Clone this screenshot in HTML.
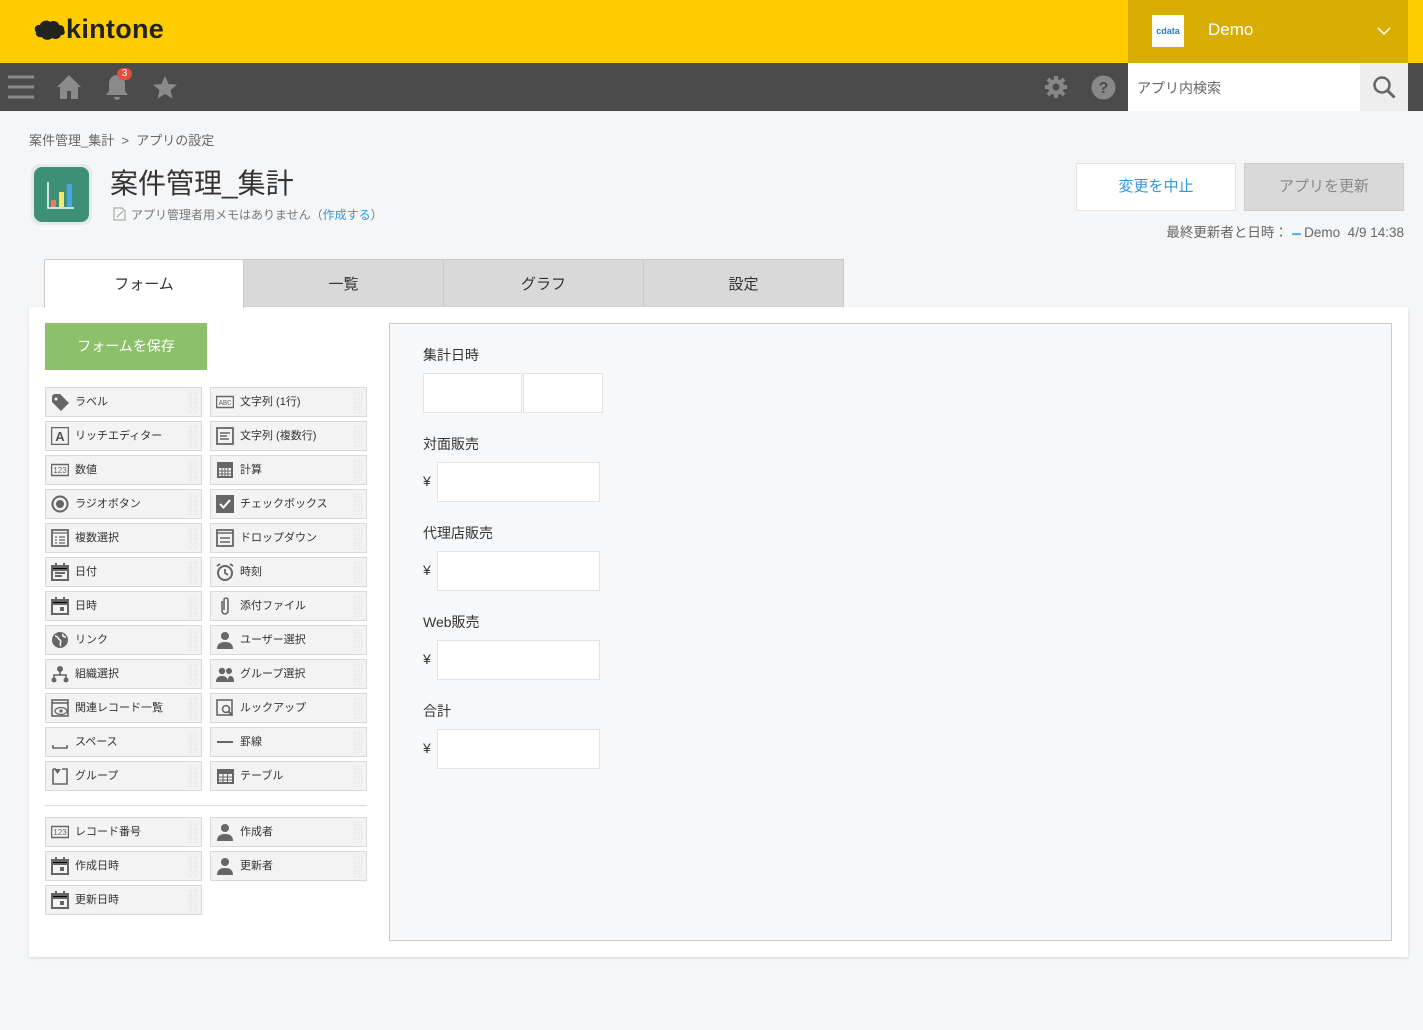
<!DOCTYPE html>
<html><head><meta charset="utf-8">
<style>
*{box-sizing:border-box;margin:0;padding:0}
body{width:1423px;height:1030px;background:#f5f6f8;font-family:"Liberation Sans","Noto Sans CJK JP",sans-serif;color:#333;position:relative;overflow:hidden}
.a{position:absolute}
.top{left:0;top:0;width:1423px;height:63px;background:#ffcc00}
.acct{left:1128px;top:0;width:280px;height:63px;background:#d9ae04}
.acct2{left:1408px;top:0;width:15px;height:63px;background:#ffcc00}
.bar{left:0;top:63px;width:1423px;height:48px;background:#4b4b4b}
.search{left:1128px;top:63px;width:232px;height:48px;background:#fff;font-size:14px;color:#666;padding:15px 0 0 9px}
.sbtn{left:1360px;top:63px;width:48px;height:48px;background:#eee}
.panel{left:29px;top:307px;width:1379px;height:650px;background:#fff;box-shadow:0 1px 3px rgba(0,0,0,.12)}
.tab{top:259px;height:48px;font-size:15px;text-align:center;line-height:50px;background:#d9d9d9;border:1px solid #c8c8c8;border-bottom:none;color:#333}
.it{width:157px;height:30px;background:#f3f3f3;border:1px solid #d9d9d9;font-size:11px;line-height:28px;padding-left:29px;color:#333}
.it svg{position:absolute;left:5px;top:5px}
.it .d{position:absolute;right:3px;top:3px;width:10px;height:22px;background:radial-gradient(circle,#fff 1px,#ccc 1.5px,transparent 2px) 0 0/5px 5px;opacity:.8}
.canvas{left:389px;top:323px;width:1003px;height:618px;background:#f7f8fa;border:1px solid #ccc}
.lbl{font-size:14px;color:#333}
.inp{background:#fff;border:1px solid #e3e3e3;height:40px}
</style></head><body>
<div class="a top"></div>
<svg class="a" style="left:32px;top:18px" width="34" height="26" viewBox="0 0 34 26"><path d="M4 14c-3-3 0-8 4-7 1-4 7-6 10-3 3-2 8-1 9 3 3 0 6 2 5 5 2 2 0 6-3 5-1 4-6 5-9 3-3 3-9 2-10-1-4 1-7-2-6-5z" fill="#222"/></svg>
<div class="a" style="left:66px;top:14px;font-size:27px;font-weight:bold;color:#222;letter-spacing:.3px">kintone</div>
<div class="a acct"></div><div class="a acct2"></div>
<div class="a" style="left:1152px;top:15px;width:32px;height:32px;background:#fff;font-size:9px;color:#2a7ac8;text-align:center;line-height:32px;font-weight:bold">cdata</div>
<div class="a" style="left:1208px;top:20px;font-size:17px;color:#fff">Demo</div>
<svg class="a" style="left:1377px;top:26px" width="14" height="10"><path d="M1 2l6 6 6-6" stroke="#fff" stroke-width="1.5" fill="none"/></svg>
<div class="a bar"></div>
<svg class="a" style="left:8px;top:74px" width="26" height="26"><path d="M0 3h26M0 13h26M0 23h26" stroke="#8a8a8a" stroke-width="3"/></svg>
<svg class="a" style="left:56px;top:74px" width="26" height="26"><path d="M13 1L1 13h3v12h7v-8h4v8h7V13h3z" fill="#8a8a8a"/></svg>
<svg class="a" style="left:104px;top:73px" width="26" height="28"><path d="M13 2c-5 0-8 4-8 9v7l-3 4h22l-3-4v-7c0-5-3-9-8-9zM10 24a3 3 0 006 0z" fill="#8a8a8a"/></svg>
<div class="a" style="left:117px;top:68px;width:15px;height:12px;border-radius:6px;background:#e74c3c;color:#fff;font-size:10px;text-align:center;line-height:12px">3</div>
<svg class="a" style="left:152px;top:75px" width="26" height="25"><path d="M13 1l3.5 8 8.5.6-6.5 5.6 2 8.4L13 19l-7.5 4.6 2-8.4L1 9.6 9.5 9z" fill="#8a8a8a"/></svg>
<svg class="a" style="left:1044px;top:75px" width="24" height="24"><circle cx="12" cy="12" r="8" fill="#888"/><path d="M12 1v22M1 12h22M4 4l16 16M20 4L4 20" stroke="#888" stroke-width="4"/><circle cx="12" cy="12" r="3.5" fill="#4b4b4b"/></svg>
<svg class="a" style="left:1091px;top:75px" width="25" height="25"><circle cx="12.5" cy="12.5" r="12" fill="#888"/><text x="12.5" y="18" font-size="16" font-weight="bold" fill="#4b4b4b" text-anchor="middle" font-family="Liberation Sans">?</text></svg>
<div class="a search">アプリ内検索</div>
<div class="a sbtn"><svg style="position:absolute;left:12px;top:12px" width="25" height="25"><circle cx="10" cy="10" r="7.5" stroke="#666" stroke-width="2.5" fill="none"/><path d="M15.5 15.5l7 7" stroke="#666" stroke-width="3"/></svg></div>

<div class="a" style="left:29px;top:130px;font-size:13px;color:#666">案件管理_集計 &nbsp;&gt;&nbsp; アプリの設定</div>
<div class="a" style="left:31px;top:164px;width:61px;height:61px;border-radius:9px;background:#e6eaec"></div>
<svg class="a" style="left:34px;top:167px" width="55" height="55" viewBox="0 0 55 55"><rect width="55" height="55" rx="8" fill="#3d8f78"/><path d="M14 15v26h26" stroke="#fff" stroke-width="1.5" fill="none"/><rect x="17" y="33" width="5" height="7" fill="#f07b5a"/><rect x="25" y="25" width="5" height="15" fill="#f5e86a"/><rect x="33" y="17" width="5" height="23" fill="#4aa3e8"/></svg>
<div class="a" style="left:110px;top:162px;font-size:28px;color:#333">案件管理_集計</div>
<svg class="a" style="left:113px;top:207px" width="14" height="14"><path d="M1 1h8l3 3v9H1z" fill="none" stroke="#999"/><path d="M4 10l6-6" stroke="#999"/></svg>
<div class="a" style="left:131px;top:206px;font-size:12px;color:#777">アプリ管理者用メモはありません（<span style="color:#3498db">作成する</span>）</div>
<div class="a" style="left:1076px;top:163px;width:160px;height:48px;background:#fff;border:1px solid #e3e3e3;color:#3498db;font-size:15px;text-align:center;line-height:46px">変更を中止</div>
<div class="a" style="left:1244px;top:163px;width:160px;height:48px;background:#d9d9d9;border:1px solid #ccc;color:#888;font-size:15px;text-align:center;line-height:46px">アプリを更新</div>
<div class="a" style="right:19px;top:221px;font-size:13.5px;color:#666;white-space:nowrap">最終更新者と日時： <span style="color:#5ab0e8;font-size:9px;letter-spacing:-1px">▪▪▪▪</span> Demo&nbsp; 4/9 14:38</div>

<div class="a tab" style="left:243px;width:201px">一覧</div>
<div class="a tab" style="left:443px;width:201px">グラフ</div>
<div class="a tab" style="left:643px;width:201px">設定</div>
<div class="a panel"></div>
<div class="a tab" style="left:44px;width:200px;background:#fff;border-color:#ccc;z-index:2;height:49px">フォーム</div>
<div class="a" style="left:45px;top:323px;width:162px;height:47px;background:#8cc06a;color:#fff;font-size:14px;text-align:center;line-height:47px">フォームを保存</div>

<div id="pal"></div>
<div class="a" style="left:45px;top:805px;width:322px;height:1px;background:#ddd"></div>

<div class="a canvas"></div>
<div class="a lbl" style="left:423px;top:345px">集計日時</div>
<div class="a inp" style="left:423px;top:373px;width:99px"></div>
<div class="a inp" style="left:523px;top:373px;width:80px"></div>
<div class="a lbl" style="left:423px;top:434px">対面販売</div>
<div class="a lbl" style="left:423px;top:473px">¥</div><div class="a inp" style="left:437px;top:462px;width:163px"></div>
<div class="a lbl" style="left:423px;top:523px">代理店販売</div>
<div class="a lbl" style="left:423px;top:562px">¥</div><div class="a inp" style="left:437px;top:551px;width:163px"></div>
<div class="a lbl" style="left:423px;top:612px">Web販売</div>
<div class="a lbl" style="left:423px;top:651px">¥</div><div class="a inp" style="left:437px;top:640px;width:163px"></div>
<div class="a lbl" style="left:423px;top:701px">合計</div>
<div class="a lbl" style="left:423px;top:740px">¥</div><div class="a inp" style="left:437px;top:729px;width:163px"></div>

<script>
var I={
tag:'<path d="M1 3v6l9 9 8-8-9-9H3z" fill="#666"/><circle cx="5" cy="6" r="1.5" fill="#f3f3f3"/>',
abc:'<rect x="0.5" y="3.5" width="17" height="11" fill="none" stroke="#666" stroke-width="1.5"/><text x="9" y="12" font-size="7" text-anchor="middle" fill="#666" font-family="Liberation Mono">ABC</text>',
A:'<rect x="0.5" y="0.5" width="17" height="17" fill="none" stroke="#666" stroke-width="1.5"/><text x="9" y="14" font-size="13" font-weight="bold" text-anchor="middle" fill="#555" font-family="Liberation Sans">A</text>',
ml:'<rect x="1" y="1" width="16" height="16" fill="none" stroke="#666" stroke-width="1.8"/><path d="M4 6h10M4 9h7M4 12h9" stroke="#666" stroke-width="1.5"/>',
n:'<rect x="0.5" y="3.5" width="17" height="11" fill="none" stroke="#666" stroke-width="1.5"/><text x="9" y="12" font-size="8" text-anchor="middle" fill="#666" font-family="Liberation Sans">123</text>',
calc:'<rect x="1" y="1" width="16" height="16" fill="#666"/><path d="M3 7h12v8H3z" fill="#f3f3f3"/><path d="M6 7v8M9 7v8M12 7v8M3 10h12M3 13h12" stroke="#666"/>',
radio:'<circle cx="9" cy="9" r="7.5" fill="none" stroke="#666" stroke-width="2"/><circle cx="9" cy="9" r="4" fill="#666"/>',
chk:'<rect x="0" y="0" width="18" height="18" fill="#666"/><path d="M4 9l3.5 3.5L14 5" stroke="#fff" stroke-width="2" fill="none"/>',
list:'<rect x="1" y="1" width="16" height="16" fill="none" stroke="#666" stroke-width="1.8"/><path d="M1 4h16M4 8h2M8 8h6M4 11h2M8 11h6M4 14h2M8 14h6" stroke="#666" stroke-width="1.3"/>',
dd:'<rect x="1" y="1" width="16" height="16" fill="none" stroke="#666" stroke-width="1.8"/><path d="M1 4h16M4 9h10M4 13h10" stroke="#666" stroke-width="1.5"/>',
date:'<rect x="1" y="3" width="16" height="14" fill="none" stroke="#666" stroke-width="2"/><path d="M1 4h16v3H1zM5 0v3M13 0v3M4 10h10M4 13h7" stroke="#666" stroke-width="2"/>',
time:'<circle cx="9" cy="10" r="7" fill="none" stroke="#666" stroke-width="2"/><path d="M9 6v4l3 2M1 3l3-2M17 3l-3-2" stroke="#666" stroke-width="1.8" fill="none"/>',
dt:'<rect x="1" y="3" width="16" height="14" fill="none" stroke="#666" stroke-width="2"/><path d="M1 4h16v3H1zM5 0v3M13 0v3" stroke="#666" stroke-width="2"/><rect x="9" y="10" width="4" height="4" fill="#666"/>',
clip:'<path d="M6 4v10a3 3 0 006 0V3a2 2 0 00-4 0v10" stroke="#666" stroke-width="1.6" fill="none"/>',
glob:'<circle cx="9" cy="9" r="8" fill="#666"/><path d="M4 5c3 0 3 3 5 4s-1 4 1 6M12 3c-1 2 1 3 3 3" stroke="#f3f3f3" stroke-width="1.6" fill="none"/>',
user:'<circle cx="9" cy="5" r="4" fill="#666"/><path d="M1 18c0-5 3-7 8-7s8 2 8 7z" fill="#666"/>',
org:'<circle cx="9" cy="4" r="3" fill="#666"/><circle cx="3" cy="15" r="2.5" fill="#666"/><circle cx="15" cy="15" r="2.5" fill="#666"/><path d="M9 6v4M3 13v-3h12v3" stroke="#666" stroke-width="1.6" fill="none"/>',
grp:'<circle cx="6" cy="6" r="3.2" fill="#666"/><circle cx="13" cy="6" r="3" fill="#666"/><path d="M0 17c0-4 2-6 6-6s6 2 6 6zM12 17c0-3 0-5 2-6 3 0 4 2 4 6z" fill="#666"/>',
rel:'<rect x="1" y="1" width="16" height="16" fill="none" stroke="#666" stroke-width="1.6"/><path d="M1 4h16" stroke="#666" stroke-width="1.6"/><ellipse cx="10" cy="12" rx="6" ry="3.5" fill="#f3f3f3" stroke="#666" stroke-width="1.3"/><circle cx="10" cy="12" r="1.6" fill="#666"/>',
look:'<rect x="1" y="1" width="15" height="15" fill="none" stroke="#666" stroke-width="1.6"/><circle cx="10" cy="10" r="3.5" fill="#f3f3f3" stroke="#666" stroke-width="1.6"/><path d="M12.5 12.5l4 4" stroke="#666" stroke-width="2"/>',
sp:'<path d="M2 12v3h14v-3" stroke="#666" stroke-width="1.6" fill="none"/>',
hr:'<path d="M1 9h16" stroke="#666" stroke-width="2"/>',
gp:'<path d="M2 2h3M11 2h5v15H2V2" stroke="#666" stroke-width="1.6" fill="none"/><path d="M3 2h7l-3.5 5z" fill="#666"/>',
tbl:'<rect x="1" y="2" width="17" height="15" fill="#666"/><path d="M3 7h13v8H3z" fill="#f3f3f3"/><path d="M7 7v8M11.5 7v8M3 10h13M3 13h13" stroke="#666"/>'
};
var L=[["tag","ラベル","abc","文字列 (1行)"],["A","リッチエディター","ml","文字列 (複数行)"],["n","数値","calc","計算"],["radio","ラジオボタン","chk","チェックボックス"],["list","複数選択","dd","ドロップダウン"],["date","日付","time","時刻"],["dt","日時","clip","添付ファイル"],["glob","リンク","user","ユーザー選択"],["org","組織選択","grp","グループ選択"],["rel","関連レコード一覧","look","ルックアップ"],["sp","スペース","hr","罫線"],["gp","グループ","tbl","テーブル"]];
var h='';
function it(x,y,ic,t){return '<div class="a it" style="left:'+x+'px;top:'+y+'px"><svg width="18" height="18" viewBox="0 0 18 18">'+I[ic]+'</svg>'+t+'<span class="d"></span></div>';}
L.forEach(function(r,i){var y=387+i*34;h+=it(45,y,r[0],r[1])+it(210,y,r[2],r[3]);});
h+=it(45,817,"n","レコード番号")+it(210,817,"user","作成者")+it(45,851,"dt","作成日時")+it(210,851,"user","更新者")+it(45,885,"dt","更新日時");
document.getElementById('pal').innerHTML=h;
</script>
</body></html>
